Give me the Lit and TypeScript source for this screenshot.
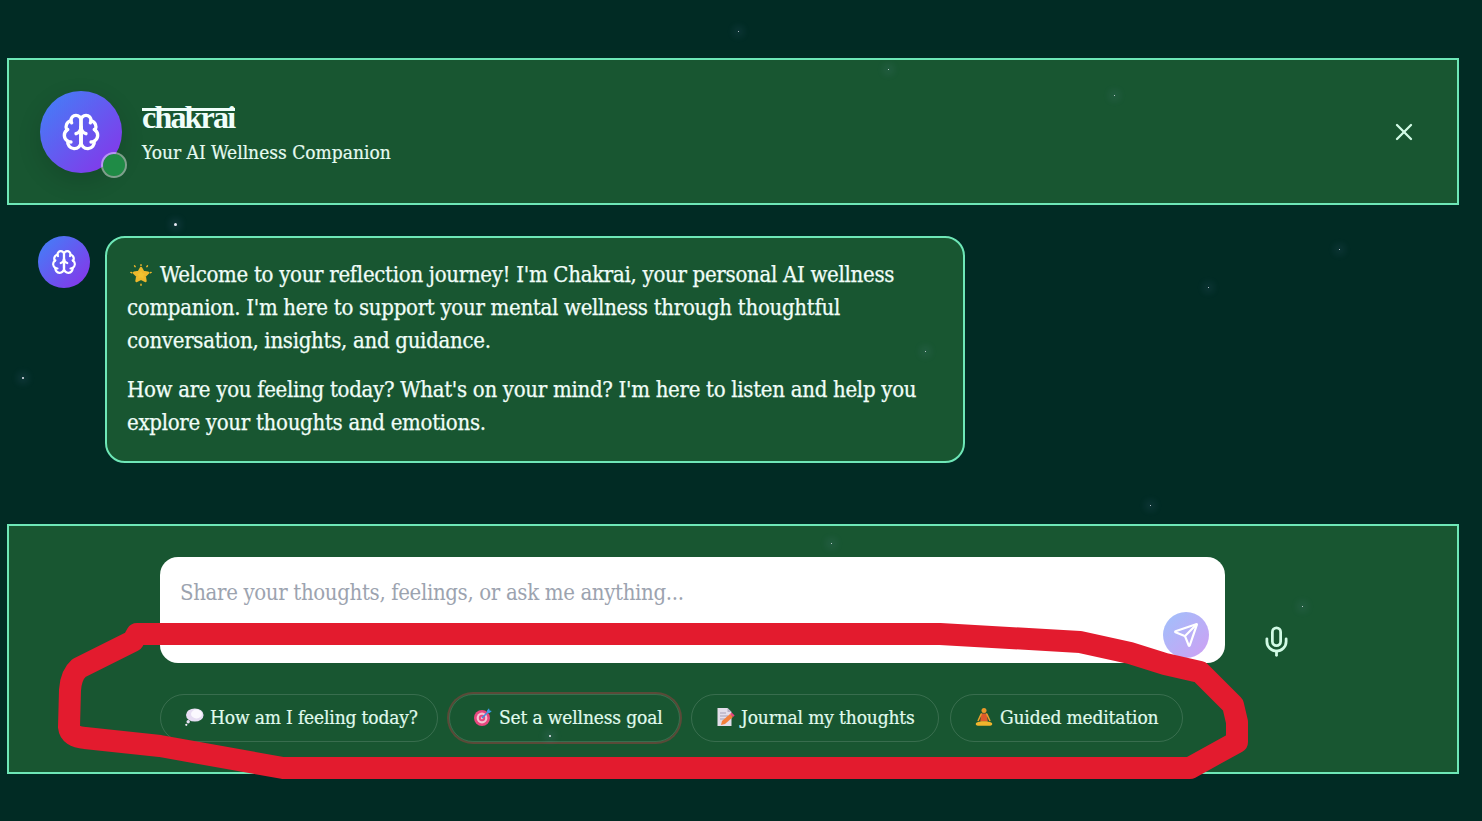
import { LitElement, css, html, svg } from 'lit'
import { customElement } from 'lit/decorators.js'

const brain = (size: number) => html`<svg width=${size} height=${size} viewBox="0 0 24 24" fill="none" stroke="#fff" stroke-width="2" stroke-linecap="round" stroke-linejoin="round">
  <path d="M12 5a3 3 0 1 0-5.997.125 4 4 0 0 0-2.526 5.77 4 4 0 0 0 .556 6.588A4 4 0 1 0 12 18Z" />
  <path d="M12 5a3 3 0 1 1 5.997.125 4 4 0 0 1 2.526 5.77 4 4 0 0 1-.556 6.588A4 4 0 1 1 12 18Z" />
  <path d="M15 13a4.500 4.500 0 0 1-3-4 4.500 4.500 0 0 1-3 4" />
  <path d="M12 18V9" />
  <path d="M17.598 6.500A3 3 0 0 0 17.997 5.125" />
  <path d="M6.003 5.125A3 3 0 0 0 6.401 6.500" />
  <path d="M3.477 10.896a4 4 0 0 1 .585-.396" />
  <path d="M19.938 10.500a4 4 0 0 1 .585.396" />
  <path d="M6 18a4 4 0 0 1-1.967-.516" />
  <path d="M19.967 17.484A4 4 0 0 1 18 18" />
</svg>`

const star = html`<svg class="emoji" width="22" height="22" viewBox="0 0 22 22">
  <path d="M11 4.200l2.200 3.900 4.700.8-3.300 3.300.8 4.700-4.400-2.200-4.400 2.200.8-4.700-3.300-3.300 4.700-.8z" fill="#f2c230" stroke="#eeb82c" stroke-width="2.600" stroke-linejoin="round" />
  <g stroke="#efb52b" stroke-width="1.500" stroke-linecap="round">
    <path d="M11 .8v.8M.9 8.400l.9.3M21.100 8.400l-.9.3M11 20.300v.9M4.600 1.800l.5.8M17.400 1.800l-.5.8" />
  </g>
</svg>`

const thought = html`<svg class="emoji" width="20" height="20" viewBox="0 0 20 20">
  <ellipse cx="10.800" cy="8" rx="8.800" ry="6.600" fill="#e7def3" />
  <ellipse cx="12.500" cy="7" rx="5.500" ry="4.400" fill="#fbf9fe" />
  <circle cx="4.200" cy="14.800" r="1.700" fill="#e7def3" />
  <circle cx="2.300" cy="17.800" r="1.100" fill="#f1ecf8" />
</svg>`

const target = html`<svg class="emoji" width="20" height="20" viewBox="0 0 20 20">
  <circle cx="9" cy="11" r="8" fill="#e8477f" />
  <circle cx="9" cy="11" r="5.400" fill="#f3c3d2" />
  <circle cx="9" cy="11" r="3.200" fill="#e8477f" />
  <circle cx="9" cy="11" r="1.200" fill="#f3c3d2" />
  <path d="M9 11l7-7" stroke="#3f8fe0" stroke-width="1.600" />
  <path d="M14 3.400l2-2.200.6 2.200 2.200.6-2.200 2-2.600-.2z" fill="#3f9be8" />
</svg>`

const memo = html`<svg class="emoji" width="20" height="20" viewBox="0 0 20 20">
  <path d="M2.500 1h10l4 4v14h-14z" fill="#e3deea" />
  <path d="M12.500 1v4h4z" fill="#b8afc6" />
  <path d="M5 6h6M5 9h8M5 12h5" stroke="#a79fb6" stroke-width="1" />
  <path d="M6 18l1-4 8-7 3 3-8 7z" fill="#f4803c" />
  <path d="M15 7l1.600-1.400 3 3L18 10z" fill="#e8477f" />
</svg>`

const lotus = html`<svg class="emoji" width="20" height="20" viewBox="0 0 20 20">
  <circle cx="10" cy="3.400" r="2.500" fill="#e9992a" />
  <path d="M7.200 6.500h5.600l1 8h-7.600z" fill="#dd5a2b" />
  <path d="M7.200 7l-3 6.500M12.800 7l3 6.500" stroke="#eba02c" stroke-width="1.600" stroke-linecap="round" />
  <path d="M2 16c3-2.300 13-2.300 16 0 .8 1.800-.5 2.800-2 2.800H4c-1.500 0-2.800-1-2-2.800z" fill="#f1b52c" />
</svg>`

const chips = [
  { icon: thought, label: 'How am I feeling today?', width: 278 },
  { icon: target, label: 'Set a wellness goal', width: 231, focused: true },
  { icon: memo, label: 'Journal my thoughts', width: 248 },
  { icon: lotus, label: 'Guided meditation', width: 233 },
]

const stars: [number, number, number][] = [
  [175, 224, 3],
  [23, 378, 2],
  [550, 736, 2],
  [738, 31, 1],
  [888, 69, 1],
  [1114, 95, 1],
  [1339, 249, 1],
  [1208, 287, 1],
  [925, 351, 1],
  [1150, 505, 1],
  [831, 543, 1],
  [1302, 606, 1],
]

@customElement('app-root')
export class AppRoot extends LitElement {
  render() {
    return html`
      <header class="panel header">
        <div class="avatar">
          ${brain(40)}
          <span class="status"></span>
        </div>
        <div class="titles">
          <h1>chakrai</h1>
          <p>Your AI Wellness Companion</p>
        </div>
        <button class="close" aria-label="Close">
          <svg width="28" height="28" viewBox="0 0 24 24" fill="none" stroke="#d1fae5" stroke-width="2" stroke-linecap="round">
            <path d="M18 6 6 18" /><path d="m6 6 12 12" />
          </svg>
        </button>
      </header>

      <section class="messages">
        <div class="avatar small">${brain(26)}</div>
        <div class="bubble">
          <p>${star} Welcome to your reflection journey! I'm Chakrai, your personal AI wellness companion. I'm here to support your mental wellness through thoughtful conversation, insights, and guidance.</p>
          <p>How are you feeling today? What's on your mind? I'm here to listen and help you explore your thoughts and emotions.</p>
        </div>
      </section>

      <footer class="panel composer">
        <div class="row">
          <div class="input">
            <textarea placeholder="Share your thoughts, feelings, or ask me anything..."></textarea>
            <button class="send" aria-label="Send">
              <svg width="26" height="26" viewBox="0 0 24 24" fill="none" stroke="#fff" stroke-width="2" stroke-linecap="round" stroke-linejoin="round">
                <path d="M14.536 21.686a.5.5 0 0 0 .937-.024l6.5-19a.496.496 0 0 0-.635-.635l-19 6.5a.5.5 0 0 0-.024.937l7.93 3.18a2 2 0 0 1 1.112 1.11z" />
                <path d="m21.854 2.147-10.94 10.939" />
              </svg>
            </button>
          </div>
          <button class="mic" aria-label="Voice input">
            <svg width="33" height="33" viewBox="0 0 24 24" fill="none" stroke="#d1fae5" stroke-width="2" stroke-linecap="round" stroke-linejoin="round">
              <path d="M12 19v3" />
              <path d="M19 10v2a7 7 0 0 1-14 0v-2" />
              <rect x="9" y="2" width="6" height="13" rx="3" />
            </svg>
          </button>
        </div>
        <div class="chips">
          ${chips.map(
            (c) => html`<button class="chip ${c.focused ? 'focused' : ''}" style="width:${c.width}px">${c.icon}<span>${c.label}</span></button>`,
          )}
        </div>
      </footer>

      ${stars.map(
        ([x, y, r]) => html`<i class="star" style="left:${x - r / 2}px;top:${y - r / 2}px;width:${r}px;height:${r}px"></i>`,
      )}

      <svg class="scribble" width="1482" height="821" viewBox="0 0 1482 821" fill="none">
        ${svg`<path d="M940 634 L137 634 L133 641 L79 668 Q71 675 70 690 L69 727 Q70 737 85 738 L160 746 L283 768 L1190 768 L1237 742 L1237 722 L1233 705 L1200 672 L1165 664 L1130 653 L1080 642 Z" stroke="#e31b2e" stroke-width="22" stroke-linejoin="round" stroke-linecap="round" />`}
      </svg>
    `
  }

  static styles = [
    css`
      :host {
        display: block;
        position: relative;
        width: 1482px;
        height: 821px;
        overflow: hidden;
        box-sizing: border-box;
        padding: 58px 23px 0 7px;
        background: #012b24;
        font-family: 'DejaVu Serif Condensed', 'DejaVu Serif', serif;
        color: #f0fdf8;
      }

      * {
        box-sizing: border-box;
      }

      button {
        border: 0;
        padding: 0;
        background: none;
        font: inherit;
        color: inherit;
      }

      .panel {
        background: #185631;
        border: 2px solid #6ee7b7;
      }

      .header {
        display: flex;
        align-items: center;
        gap: 20px;
        height: 147px;
        padding: 0 39px 0 31px;
      }

      .avatar {
        position: relative;
        display: flex;
        flex: none;
        align-items: center;
        justify-content: center;
        width: 82px;
        height: 82px;
        border-radius: 50%;
        background: linear-gradient(135deg, #3f83f8, #8b30e8);
        box-shadow: 0 8px 24px rgba(0, 0, 0, 0.14);
      }

      .avatar.small {
        width: 52px;
        height: 52px;
        box-shadow: none;
      }

      .status {
        position: absolute;
        left: 61px;
        top: 61px;
        width: 26px;
        height: 26px;
        border-radius: 50%;
        background: #1f8b46;
        border: 2px solid rgba(255, 255, 255, 0.45);
        background-clip: padding-box;
      }

      .titles {
        flex: 1;
        min-width: 0;
      }

      h1 {
        position: relative;
        width: 93px;
        margin: 0;
        height: 38px;
        font-family: 'Liberation Serif', serif;
        font-size: 32px;
        font-weight: 700;
        line-height: 38px;
        letter-spacing: -1.800px;
        color: #f0fdfa;
      }

      h1::before {
        content: '';
        position: absolute;
        left: 0;
        right: 0;
        top: 10px;
        height: 3px;
        background: #f0fdfa;
      }

      .titles p {
        margin: 3px 0 0;
        font-size: 19px;
        line-height: 26px;
        color: #e6fbf1;
        -webkit-text-stroke: 0.2px currentColor;
      }

      .close {
        display: flex;
      }

      .messages {
        display: flex;
        align-items: flex-start;
        gap: 15px;
        height: 319px;
        padding: 31px 0 0 31px;
      }

      .bubble {
        width: 860px;
        height: 227px;
        padding: 20px 20px 0;
        background: #185631;
        border: 2px solid #6ee7b7;
        border-radius: 20px;
        font-size: 22px;
        line-height: 33px;
        letter-spacing: -0.300px;
        -webkit-text-stroke: 0.25px currentColor;
      }

      .bubble p {
        margin: 0 0 16px;
      }

      .emoji {
        flex: none;
      }

      .bubble .emoji {
        vertical-align: -4px;
        margin: 0 2px 0 3px;
      }

      .composer {
        height: 250px;
        padding: 31px 0 0 151px;
      }

      .row {
        display: flex;
        align-items: flex-end;
        gap: 28px;
      }

      .input {
        position: relative;
        width: 1065px;
        height: 106px;
        border-radius: 18px;
        background: #fff;
      }

      textarea {
        display: block;
        width: 100%;
        height: 100%;
        padding: 21px 20px;
        border: 0;
        outline: 0;
        resize: none;
        border-radius: inherit;
        background: none;
        font: inherit;
        font-size: 22px;
        line-height: 30px;
        letter-spacing: -0.350px;
      }

      textarea::placeholder {
        color: #9ca3af;
        opacity: 1;
      }

      .send {
        position: absolute;
        right: 16px;
        bottom: 5px;
        display: flex;
        align-items: center;
        justify-content: center;
        width: 46px;
        height: 46px;
        border-radius: 50%;
        background: linear-gradient(135deg, #9fc1fb, #cf9ff3);
      }

      .mic {
        display: flex;
        align-items: center;
        justify-content: center;
        width: 46px;
        height: 44px;
      }

      .chips {
        display: flex;
        gap: 11px;
        margin-top: 31px;
      }

      .chip {
        display: flex;
        flex: none;
        align-items: center;
        gap: 6px;
        height: 48px;
        padding: 0 0 2px 23px;
        border: 1px solid rgba(255, 255, 255, 0.14);
        border-radius: 24px;
        font-size: 19px;
        letter-spacing: -0.150px;
        color: #e0fbee;
        -webkit-text-stroke: 0.2px currentColor;
        white-space: nowrap;
      }

      .chip.focused {
        box-shadow: 0 0 0 2px #5a4a38;
      }

      .star {
        position: absolute;
        border-radius: 50%;
        background: #e8eaf6;
        box-shadow: 0 0 8px 3px rgba(160, 180, 255, 0.18);
      }

      .scribble {
        position: absolute;
        left: 0;
        top: 0;
        pointer-events: none;
      }
    `,
  ]
}

declare global {
  interface HTMLElementTagNameMap {
    'app-root': AppRoot
  }
}
